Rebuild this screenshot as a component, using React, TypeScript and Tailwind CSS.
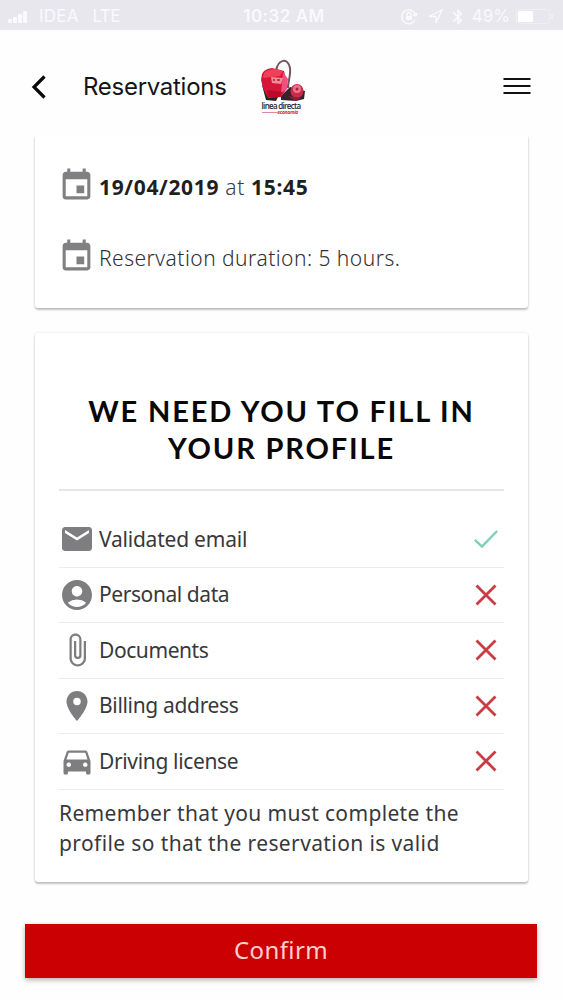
import React from "react";
import { MdEvent, MdEmail, MdAccountCircle, MdAttachFile, MdPlace, MdDirectionsCar, MdBluetooth } from "react-icons/md";
import type { IconType } from "react-icons";

function StatusBar() {
  return (
    <div className="grid h-[30px] shrink-0 grid-cols-3 items-center bg-[#e8e7ed] font-['Inter',sans-serif] text-[17px] text-[#faf9fd]">
      <div className="flex items-center pl-2 pt-[3px]">
        <svg width="20" height="14" viewBox="0 0 20 14" fill="currentColor">
          <rect x="0" y="9" width="4" height="4" rx="1" />
          <rect x="5" y="7" width="4" height="6" rx="1" />
          <rect x="10" y="4" width="4" height="9" rx="1" />
          <rect x="15" y="1" width="4" height="12" rx="1" />
        </svg>
        <span className="ml-[11px] tracking-[0.2px]">IDEA</span>
        <span className="ml-[14px] tracking-[-0.7px]">LTE</span>
      </div>
      <div className="pl-[5px] pt-[3px] text-center font-semibold tracking-[0.5px]">10:32 AM</div>
      <div className="flex items-center justify-end pr-[7px] pt-[3px]">
        <svg width="18" height="18" viewBox="0 0 18 18" fill="none" stroke="currentColor" strokeWidth="1.5">
          <path d="M15 12A7 7 0 1 1 15.5 7M13 7l3 1 1-3" />
          <rect x="6" y="8" width="6" height="4" fill="currentColor" stroke="none" />
          <path d="M7 8V6.500a2 2 0 0 1 4 0V8" />
        </svg>
        <svg className="ml-2.5" width="15" height="15" viewBox="0 0 15 15" fill="none" stroke="currentColor" strokeWidth="1.3">
          <path d="M1 7.500L14 1L8 14V7.500Z" />
        </svg>
        <MdBluetooth className="ml-1.5" size={18} />
        <span className="ml-[5px]">49%</span>
        <svg className="ml-[6px]" width="40" height="16" viewBox="0 0 40 16" fill="none">
          <rect x="0.500" y="0.500" width="33" height="14" rx="3" stroke="#f0eff4" />
          <rect x="2" y="2" width="15" height="11" rx="1.500" fill="#fff" />
          <path d="M36 5v5" stroke="#f0eff4" strokeWidth="2" />
        </svg>
      </div>
    </div>
  );
}

function Logo() {
  return (
    <div className="flex w-[48px] flex-col items-center">
      <svg width="48" height="44" viewBox="0 0 48 44">
        <path d="M17 12C19 0 29 -2 31 9C32 16 29 22 29 29" fill="none" stroke="#74545c" strokeWidth="2" />
        <path d="M3 26L8 27L20 36L17 42L7 41Z" fill="#2c2028" />
        <path d="M22 37L31 28L46 32L45 40L37 42L22 41Z" fill="#35222a" />
        <path d="M3 15Q5 10 13 9L25 12L29 28L22 38L9 39L4 29L2 21Z" fill="#d61638" />
        <path d="M5 14Q13 7 24 12L21 17L4 19Z" fill="#ef4058" />
        <path d="M24 13L29 20L28 30L22 34Z" fill="#f04f7f" />
        <path d="M12 18L24 19L22 25L13 24Z" fill="#ef8a96" />
        <path d="M14 20h2v2h-2zM18 20h3v2h-3z" fill="#c7324b" />
        <path d="M8 31L23 33L21 38L9 38Z" fill="#bd0929" />
        <ellipse cx="38" cy="32" rx="6.500" ry="7" fill="#c92c49" />
        <circle cx="38" cy="30" r="4" fill="#ef7189" />
        <circle cx="38" cy="30" r="1.500" fill="#a6213e" />
        <path d="M29 37L42 39L36 42Z" fill="#8e1d35" />
      </svg>
      <div className="-ml-[4px] -mt-px whitespace-nowrap font-['Open_Sans',sans-serif] text-[8px] font-semibold leading-[8px] tracking-[-0.700px] text-[#29262a]">linea directa</div>
      <div className="-ml-[6px] flex w-[36px] items-center">
        <span className="h-px flex-1 bg-[#d98f98]" />
        <span className="font-['Open_Sans',sans-serif] text-[5px] font-bold italic leading-[5px] tracking-[-0.3px] text-[#d8283f]">economía</span>
      </div>
    </div>
  );
}

function Cross() {
  return (
    <svg width="22" height="22" viewBox="0 0 22 22" fill="none" stroke="#c83d43" strokeWidth="2.800">
      <path d="M1.500 1.500L20.500 20.500M20.500 1.500L1.500 20.500" />
    </svg>
  );
}

function Check() {
  return (
    <svg width="27" height="20" viewBox="0 0 27 20" fill="none" stroke="#7dd0b8" strokeWidth="2.800">
      <path d="M1 11L9 18.500L26 1" />
    </svg>
  );
}

const items: { label: string; icon: IconType; done: boolean; spacing: string }[] = [
  { label: "Validated email", icon: MdEmail, done: true, spacing: "tracking-[-0.22px]" },
  { label: "Personal data", icon: MdAccountCircle, done: false, spacing: "tracking-[-0.42px]" },
  { label: "Documents", icon: MdAttachFile, done: false, spacing: "tracking-[-0.42px]" },
  { label: "Billing address", icon: MdPlace, done: false, spacing: "tracking-[-0.33px]" },
  { label: "Driving license", icon: MdDirectionsCar, done: false, spacing: "tracking-[-0.35px]" },
];

export default function App() {
  return (
    <div className="flex h-[1000px] w-[563px] flex-col overflow-hidden bg-[#fefefe] font-['Noto_Sans',sans-serif] text-[#38383b]">
      <StatusBar />
      <header className="flex h-[106px] shrink-0 items-center pl-[31px] pr-[32px]">
        <svg className="mt-[7px]" width="15" height="24" viewBox="0 0 15 24" fill="none" stroke="#0a0a0b" strokeWidth="3.200">
          <path d="M13.500 1.500L3 12L13.500 22.500" />
        </svg>
        <h1 className="ml-[37px] mt-[7px] w-[145px] whitespace-nowrap font-['Inter',sans-serif] text-[24px] tracking-[-0.28px] text-[#151518]">Reservations</h1>
        <div className="ml-[31px] mt-[8px]"><Logo /></div>
        <svg className="ml-auto mt-[6px]" width="28" height="18" viewBox="0 0 28 18" stroke="#111113" strokeWidth="2.200">
          <path d="M0.500 2H27.500M0.500 9H27.500M0.500 16H27.500" />
        </svg>
      </header>

      <main className="flex flex-col px-[35px]">
        <section className="flex h-[172px] flex-col rounded-b-[3px] bg-white px-[23px] pt-[29px] shadow-[0_2px_2px_rgba(0,0,0,0.22),0_0_3px_rgba(0,0,0,0.12)] [clip-path:inset(0_-6px_-6px_-6px)]">
          <div className="flex h-[46px] items-center">
            <MdEvent size={37} color="#808082" className="-mt-[6px]" />
            <p className="ml-[4px] whitespace-nowrap text-[21px] font-bold tracking-[0.66px] text-[#1f1f21]">19/04/2019 <span className="font-light text-[#3d3d40]">at</span> 15:45</p>
          </div>
          <div className="mt-[25px] flex h-[46px] items-center">
            <MdEvent size={37} color="#808082" className="-mt-[6px]" />
            <p className="ml-[4px] whitespace-nowrap text-[21px] font-light tracking-[0.47px] text-[#303033]">Reservation duration: 5 hours.</p>
          </div>
        </section>

        <section className="mt-[25px] flex h-[549px] flex-col rounded-[3px] bg-white px-[24px] shadow-[0_2px_2px_rgba(0,0,0,0.22),0_0_3px_rgba(0,0,0,0.12)]">
          <h2 className="mt-[59px] h-[99px] border-b-2 border-[#e6e6e8] text-center font-['Lato',sans-serif] text-[29px] font-bold leading-[37px] tracking-[1.84px] text-[#08080a]">
            <span className="block whitespace-nowrap">WE NEED YOU TO FILL IN</span>
            <span className="block whitespace-nowrap">YOUR PROFILE</span>
          </h2>
          <ul className="mt-[21px]">
            {items.map(({ label, icon: Icon, done, spacing }) => (
              <li key={label} className="flex h-[55.5px] items-center border-b border-[#ececef] pr-[6px]">
                <Icon size={36} color="#7e7e80" />
                <span className={"ml-[4px] whitespace-nowrap text-[21px] " + spacing}>{label}</span>
                <span className="ml-auto flex w-[24px] justify-center">{done ? <Check /> : <Cross />}</span>
              </li>
            ))}
          </ul>
          <p className="mt-[8px] whitespace-nowrap text-[21px] leading-[30px]">
            <span className="block tracking-[0.35px]">Remember that you must complete the</span>
            <span className="block tracking-[0.39px]">profile so that the reservation is valid</span>
          </p>
        </section>
      </main>

      <button className="mx-[25px] mt-[42px] h-[54px] w-[512px] shrink-0 bg-[#cb0002] pb-[2px] text-[24px] tracking-[0.4px] text-[#ffd0d0] shadow-[0_2px_5px_rgba(0,0,0,0.3)]">Confirm</button>
    </div>
  );
}
